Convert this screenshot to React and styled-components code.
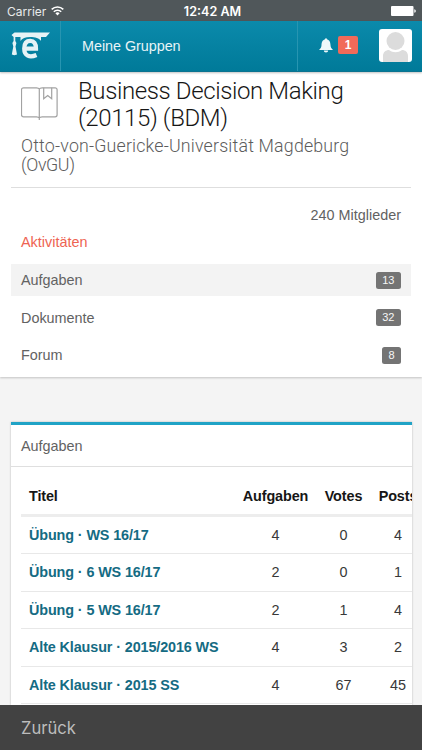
import styled, { createGlobalStyle } from "styled-components";

const GlobalStyle = createGlobalStyle`
  * {
    box-sizing: border-box;
  }
  body {
    margin: 0;
    background: #f4f4f4;
    font-family: "Liberation Sans", Arial, sans-serif;
    font-size: 14.4px;
    color: #626262;
  }
`;

const Screen = styled.div`
  height: 750px;
  display: flex;
  flex-direction: column;
  overflow: hidden;
`;

const StatusBar = styled.div`
  height: 21px;
  flex: none;
  display: grid;
  grid-template-columns: 1fr auto 1fr;
  align-items: center;
  padding: 1px 6px 0 7px;
  background: #50575a;
  color: #fff;
  font-family: Inter, "Liberation Sans", sans-serif;
`;

const Carrier = styled.div`
  display: flex;
  align-items: center;
  gap: 5px;
  font-size: 12px;
  color: #e9ebeb;
`;

const Clock = styled.div`
  padding-left: 2px;
  font-size: 12.6px;
  font-weight: 600;
`;

const Battery = styled.svg`
  justify-self: end;
`;

const NavBar = styled.nav`
  height: 51px;
  flex: none;
  display: flex;
  background: linear-gradient(#0b8aab, #007a99);
  border-bottom: 1px solid #0a7390;
  box-shadow: 0 1px 2px rgba(0, 0, 0, 0.25);
  color: #e8f4f7;
  z-index: 1;
`;

const NavLogo = styled.div`
  width: 61px;
  padding: 11px 0 0 11px;
  border-right: 1px solid #2795b1;
`;

const NavTitle = styled.div`
  flex: 1;
  padding: 17px 0 0 21px;
  line-height: 17px;
  letter-spacing: -0.05px;
`;

const NavUser = styled.div`
  width: 125px;
  display: flex;
  align-items: flex-start;
  padding: 8px 10px 0 21px;
  border-left: 1px solid #2795b1;
`;

const Bell = styled.svg`
  margin-top: 9px;
`;

const Alert = styled.span`
  width: 20px;
  height: 18px;
  margin: 7px 0 0 5px;
  border-radius: 2px;
  background: #f16a59;
  color: #fff;
  font-size: 12px;
  font-weight: bold;
  line-height: 18px;
  text-align: center;
`;

const Avatar = styled.svg`
  margin-left: auto;
`;

const Group = styled.section`
  height: 305px;
  flex: none;
  padding: 6px 11px 0;
  background: #fff;
  box-shadow: 0 1px 2px rgba(0, 0, 0, 0.2);
`;

const GroupHead = styled.header`
  height: 110px;
  padding: 0 10px;
  border-bottom: 1px solid #dedede;
  font-family: Roboto, "Open Sans", sans-serif;
  font-weight: 300;
`;

const TitleRow = styled.div`
  display: flex;
`;

const BookIcon = styled.svg`
  margin: 8px 19px 0 0;
  flex: none;
`;

const Title = styled.h1`
  margin: 0;
  font-size: 24px;
  font-weight: 300;
  line-height: 27px;
  letter-spacing: -0.38px;
  color: #161616;
  white-space: nowrap;
`;

const Subtitle = styled.h2`
  margin: 4px 0 0;
  font-size: 17.8px;
  font-weight: 300;
  line-height: 19px;
  letter-spacing: 0.18px;
  color: #5c5c5c;
  white-space: nowrap;
`;

const SubtitleShort = styled.span`
  letter-spacing: -0.4px;
`;

const Members = styled.div`
  padding: 19px 10px 0;
  line-height: 17px;
  text-align: right;
`;

const Activities = styled.div`
  padding: 10px 10px 0;
  line-height: 17px;
  color: #ee6352;
`;

const Menu = styled.div`
  margin-top: 13px;
`;

const MenuItem = styled.div`
  height: ${(p) => (p.$active ? 32 : 37.5)}px;
  margin-bottom: ${(p) => (p.$active ? 3 : 0)}px;
  display: flex;
  align-items: center;
  justify-content: space-between;
  padding: 0 10px;
  background: ${(p) => (p.$active ? "#f3f3f3" : "transparent")};
`;

const Count = styled.span`
  height: 17px;
  padding: 0 6.5px;
  border-radius: 2.5px;
  background: #747474;
  color: #f7f7f7;
  font-size: 11px;
  line-height: 16px;
`;

const Panel = styled.section`
  margin: 45px 10px 0 11px;
  flex: 1;
  min-height: 0;
  overflow: hidden;
  border-top: 3px solid #20a3c6;
  background: #fff;
  box-shadow: 0 0 2px rgba(0, 0, 0, 0.25);
`;

const PanelTitle = styled.div`
  height: 42px;
  padding: 0 10px;
  border-bottom: 1px solid #dfdfdf;
  line-height: 42px;
`;

const Table = styled.div`
  width: 420px;
  margin: 11px 0 0 10px;
`;

const Row = styled.div`
  display: grid;
  grid-template-columns: 214px 81px 55px 54px;
  height: ${(p) => (p.$head ? 39 : 37.4)}px;
  line-height: 37px;
  border-bottom: ${(p) => (p.$head ? "3px solid #ededed" : "1px solid #e8e8e8")};
  color: ${(p) => (p.$head ? "#161616" : "#383838")};
  font-weight: ${(p) => (p.$head ? "bold" : "normal")};
  letter-spacing: ${(p) => (p.$head ? "-0.1px" : "normal")};
`;

const Cell = styled.span`
  text-align: center;
  white-space: nowrap;
`;

const TitleCell = styled.span`
  padding-left: 8px;
  font-weight: bold;
  letter-spacing: -0.12px;
  white-space: nowrap;
  color: ${(p) => (p.$link ? "#156b83" : "inherit")};
`;

const BackBar = styled.footer`
  height: 45px;
  flex: none;
  padding: 0 21px;
  background: #424242;
  color: #bcbcbc;
  font-family: Inter, "Liberation Sans", sans-serif;
  font-size: 16.6px;
  line-height: 46px;
  z-index: 1;
`;

const menu = [
  { label: "Aufgaben", count: 13, active: true },
  { label: "Dokumente", count: 32 },
  { label: "Forum", count: 8 },
];

const tasks = [
  ["Übung · WS 16/17", 4, 0, 4],
  ["Übung · 6 WS 16/17", 2, 0, 1],
  ["Übung · 5 WS 16/17", 2, 1, 4],
  ["Alte Klausur · 2015/2016 WS", 4, 3, 2],
  ["Alte Klausur · 2015 SS", 4, 67, 45],
];

function Wifi() {
  return (
    <svg width="13" height="10" viewBox="0 0 13 10" fill="none" stroke="#fff" strokeWidth="1.6">
      <path d="M.7 3.4a8.3 8.3 0 0 1 11.6 0M2.8 5.7a5.3 5.3 0 0 1 7.4 0" />
      <path d="M4.4 7.3a3 3 0 0 1 4.2 0L6.5 9.6z" fill="#fff" stroke="none" />
    </svg>
  );
}

// graduation cap with tassel over a round bowl
function Logo() {
  return (
    <svg width="40" height="28" viewBox="0 0 40 28" fill="#e6f3f6">
      <path d="M3.5.5H39L35 5H30V9C28.5 6.3 24 5 19.2 5S11 6.3 9.5 9V5H4.300v4L5.400 11 4.500 14.500 6 22.500 3.300 23.200 .8 22.500 2.300 14.500 1.400 11 2.600 9V5L.5 3z" />
      <path
        d="M13.200 16.600H25C25 11.500 23 8.900 19.300 8.900 15.200 8.900 13.200 12 13.200 16.600 13.200 23.800 18.500 26 25.500 23"
        fill="none"
        stroke="#e6f3f6"
        strokeWidth="4.2"
      />
    </svg>
  );
}

export default function App() {
  return (
    <Screen>
      <GlobalStyle />
      <StatusBar>
        <Carrier>
          Carrier <Wifi />
        </Carrier>
        <Clock>12:42 AM</Clock>
        <Battery width="25" height="10" viewBox="0 0 25 10" fill="#fff">
          <rect width="22.5" height="10" rx="1" />
          <path d="M23.3 3.2c2 .3 2 3.3 0 3.6z" />
        </Battery>
      </StatusBar>

      <NavBar>
        <NavLogo>
          <Logo />
        </NavLogo>
        <NavTitle>Meine Gruppen</NavTitle>
        <NavUser>
          <Bell width="14" height="15" viewBox="0 0 14 15" fill="#eef8fa">
            <path d="M6 1.2a1 1 0 0 1 2 0C10.8 2 11.3 4.5 11.5 7c.1 2 .8 3.5 2.5 5H0C1.8 10.5 2.4 9 2.5 7 2.7 4.5 3.2 2 6 1.2zM4.8 12.6h4.4a2.2 2 0 0 1-4.4 0z" />
          </Bell>
          <Alert>1</Alert>
          <Avatar width="33" height="33" viewBox="0 0 33 33">
            <rect width="33" height="33" rx="3" fill="#fff" />
            <circle cx="16.5" cy="12" r="9" fill="#dcdcdc" />
            <path d="M4 33v-6c0-4 3-6 6-6 4 3 9 3 13 0 3 0 6 2 6 6v6z" fill="#dcdcdc" />
          </Avatar>
        </NavUser>
      </NavBar>

      <Group>
        <GroupHead>
          <TitleRow>
            <BookIcon width="38" height="36" viewBox="0 0 38 36" fill="none" stroke="#a2a2a2" strokeWidth="1.2">
              <path d="M18.300 3C17.800 2 17 1.800 15.500 1.800H2.500a2 2 0 0 0-2 2v25a2 2 0 0 0 2 2h13c1.500 0 2.300.300 2.800 1.200.500-.900 1.300-1.200 2.800-1.200h13a2 2 0 0 0 2-2V3.800a2 2 0 0 0-2-2h-13c-1.500 0-2.300.200-2.800 1.200V34" />
              <path d="M22.700 1.800v11l4-3.300 4 3.300v-11" />
            </BookIcon>
            <Title>
              Business Decision Making
              <br />
              (20115) (BDM)
            </Title>
          </TitleRow>
          <Subtitle>
            Otto-von-Guericke-Universität Magdeburg
            <br />
            <SubtitleShort>(OvGU)</SubtitleShort>
          </Subtitle>
        </GroupHead>
        <Members>240 Mitglieder</Members>
        <Activities>Aktivitäten</Activities>
        <Menu>
          {menu.map((item) => (
            <MenuItem key={item.label} $active={item.active}>
              {item.label}
              <Count>{item.count}</Count>
            </MenuItem>
          ))}
        </Menu>
      </Group>

      <Panel>
        <PanelTitle>Aufgaben</PanelTitle>
        <Table>
          <Row $head>
            <TitleCell>Titel</TitleCell>
            <Cell>Aufgaben</Cell>
            <Cell>Votes</Cell>
            <Cell>Posts</Cell>
          </Row>
          {tasks.map(([title, ...counts]) => (
            <Row key={title}>
              <TitleCell $link>{title}</TitleCell>
              {counts.map((count, i) => (
                <Cell key={i}>{count}</Cell>
              ))}
            </Row>
          ))}
        </Table>
      </Panel>

      <BackBar>Zurück</BackBar>
    </Screen>
  );
}
